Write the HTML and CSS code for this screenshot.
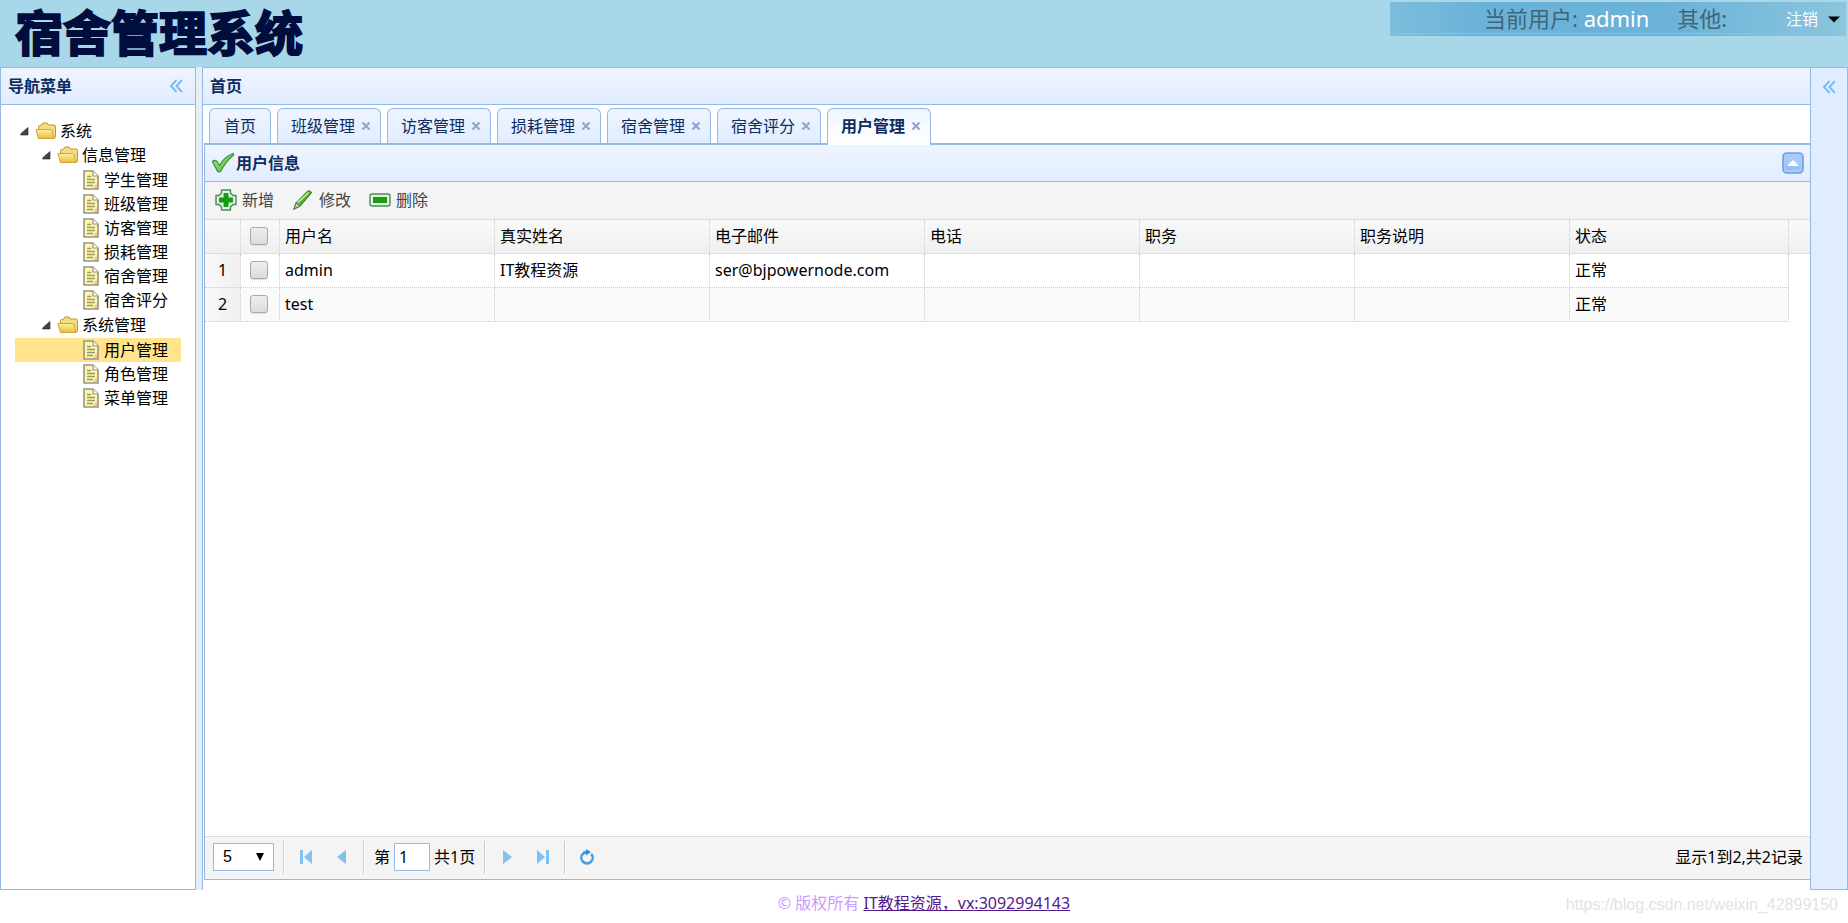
FILE: index.html
```html
<!DOCTYPE html>
<html lang="zh-CN">
<head>
<meta charset="utf-8">
<title>宿舍管理系统</title>
<link rel="stylesheet" href="styles.css">
</head>
<body>
<svg class="defs" aria-hidden="true">
  <defs>
    <linearGradient id="gold" x1="0" y1="0" x2="0" y2="1"><stop offset="0" stop-color="#fff0a0"/><stop offset="1" stop-color="#e9bd3c"/></linearGradient>
    <linearGradient id="leaf" x1="0" y1="0" x2="1" y2="1"><stop offset="0" stop-color="#b6f28a"/><stop offset="1" stop-color="#3fb52e"/></linearGradient>
    <symbol id="arrow" viewBox="0 0 10 10"><path d="M8 1.500V9H.5l1-2z" fill="#444" stroke="#222" stroke-width=".6"/></symbol>
    <symbol id="folder" viewBox="0 0 22 18">
      <path d="M3.500 16.500V4.500q0-1 1-1h1.500l2-2.500h4l1.500 2h5.500q1.500 0 1.500 1.500V14q0 2.500-2 2.500z" fill="#f6dc80" stroke="#c0922a"/>
      <path d="M1 7.500h14.500q1.500 0 1.800 1.500l1.400 7.500H4.500q-1 0-1.400-1.200z" fill="url(#gold)" stroke="#d2a536"/>
    </symbol>
    <symbol id="doc" viewBox="0 0 16 20">
      <path d="M1 1h9l5 5v13H1z" fill="#fdf8a8" stroke="#98948a" stroke-width="1.600"/>
      <path d="M10 1v5h5" fill="#fff" stroke="#98948a" stroke-width="1.200"/>
      <path d="M4 6.500h4M4 9.500h8M4 12.500h8M4 15.500h6" stroke="#9c986c" stroke-width="1.300"/>
      <path d="M14 13v5h-4z" fill="#f6c58b"/>
    </symbol>
    <symbol id="chev" viewBox="0 0 14 14"><path d="M7.500 1 2 7l5.500 6M13 1 7.500 7l5.500 6" fill="none" stroke="#7bbcf0" stroke-width="2"/></symbol>
    <symbol id="cross" viewBox="0 0 10 10"><path d="M1.500 1.500l7 7M8.500 1.500l-7 7" stroke="#8ea6d2" stroke-width="2.200"/></symbol>
  </defs>
</svg>

<header class="banner">
  <h1 class="logo">宿舍管理系统</h1>
  <div class="userbar">
    <span class="label">当前用户: <b class="name">admin</b></span>
    <span class="label other">其他:</span>
    <button class="logout" type="button">注销<svg width="12" height="7" viewBox="0 0 12 7"><path d="M0 .5h12L6 6.500z"/></svg></button>
  </div>
</header>

<div class="layout">
  <aside class="west">
    <div class="panel-head"><h2>导航菜单</h2><button class="plain" type="button" aria-label="收起"><svg width="14" height="14"><use href="#chev"/></svg></button></div>
    <ul class="tree">
      <li><div class="node"><svg width="10" height="10"><use href="#arrow"/></svg><svg class="folder" width="22" height="18"><use href="#folder"/></svg>系统</div>
        <ul>
          <li><div class="node l2"><svg width="10" height="10"><use href="#arrow"/></svg><svg class="folder" width="22" height="18"><use href="#folder"/></svg>信息管理</div>
            <ul>
              <li><a class="node l3" href="#"><svg width="16" height="20"><use href="#doc"/></svg>学生管理</a></li>
              <li><a class="node l3" href="#"><svg width="16" height="20"><use href="#doc"/></svg>班级管理</a></li>
              <li><a class="node l3" href="#"><svg width="16" height="20"><use href="#doc"/></svg>访客管理</a></li>
              <li><a class="node l3" href="#"><svg width="16" height="20"><use href="#doc"/></svg>损耗管理</a></li>
              <li><a class="node l3" href="#"><svg width="16" height="20"><use href="#doc"/></svg>宿舍管理</a></li>
              <li><a class="node l3" href="#"><svg width="16" height="20"><use href="#doc"/></svg>宿舍评分</a></li>
            </ul></li>
          <li><div class="node l2"><svg width="10" height="10"><use href="#arrow"/></svg><svg class="folder" width="22" height="18"><use href="#folder"/></svg>系统管理</div>
            <ul>
              <li><a class="node l3 selected" href="#"><svg width="16" height="20"><use href="#doc"/></svg>用户管理</a></li>
              <li><a class="node l3" href="#"><svg width="16" height="20"><use href="#doc"/></svg>角色管理</a></li>
              <li><a class="node l3" href="#"><svg width="16" height="20"><use href="#doc"/></svg>菜单管理</a></li>
            </ul></li>
        </ul></li>
    </ul>
  </aside>

  <main class="center">
    <div class="panel-head"><h2>首页</h2></div>
    <nav class="tabs">
      <div class="tab"><a href="#">首页</a></div>
      <div class="tab"><a href="#">班级管理</a><button class="plain" type="button" aria-label="关闭"><svg width="10" height="10"><use href="#cross"/></svg></button></div>
      <div class="tab"><a href="#">访客管理</a><button class="plain" type="button" aria-label="关闭"><svg width="10" height="10"><use href="#cross"/></svg></button></div>
      <div class="tab"><a href="#">损耗管理</a><button class="plain" type="button" aria-label="关闭"><svg width="10" height="10"><use href="#cross"/></svg></button></div>
      <div class="tab"><a href="#">宿舍管理</a><button class="plain" type="button" aria-label="关闭"><svg width="10" height="10"><use href="#cross"/></svg></button></div>
      <div class="tab"><a href="#">宿舍评分</a><button class="plain" type="button" aria-label="关闭"><svg width="10" height="10"><use href="#cross"/></svg></button></div>
      <div class="tab active"><a href="#">用户管理</a><button class="plain" type="button" aria-label="关闭"><svg width="10" height="10"><use href="#cross"/></svg></button></div>
    </nav>
    <section class="grid">
      <div class="panel-head">
        <svg width="24" height="22" viewBox="0 0 24 22"><path d="M1.500 9.500q2-2 4.500 0l2.500 4Q13 5 22 1.500q.8 0 .5 1.500Q15 9 9.500 19.500q-1.500 1-3-.5z" fill="url(#leaf)" stroke="#3d9440" stroke-width="1.300"/></svg>
        <h2>用户信息</h2>
        <button class="plain" type="button" aria-label="折叠"><svg width="22" height="22" viewBox="0 0 22 22"><rect x="1" y="1" width="20" height="20" rx="4" fill="#a9cbf8" stroke="#6f9fdc" stroke-width="1.600"/><path d="M3 12h16v6H3z" fill="#97bff4"/><path d="M5 14l6-6 6 6z" fill="#fff"/></svg></button>
      </div>
      <div class="toolbar">
        <button type="button"><svg width="22" height="22" viewBox="0 0 22 22"><path d="M6.500 1h9v3l2.500 2.500h3v9h-3L15.500 18v3h-9v-3L4 15.500H1v-9h3L6.500 4z" fill="#dcf2da" stroke="#4b8a55" stroke-width="1.400" stroke-linejoin="round"/><path d="M9 4.500h4V9h4.500v4H13v4.500H9V13H4.500V9H9z" fill="#189c18" stroke="#189c18"/></svg>新增</button>
        <button type="button"><svg width="22" height="22" viewBox="0 0 22 22"><path d="M2 20l2-6L15.500 2.500q2-1.500 4 1L8 17z" fill="#58c431" stroke="#3c7f35" stroke-width="1.200"/><path d="M5.500 13.500L16.500 3.500" stroke="#c4f29f" stroke-width="1.600"/><path d="M2 20l2-6 4 3z" fill="#c8cfbd" stroke="#557a50"/></svg>修改</button>
        <button type="button"><svg width="22" height="22" viewBox="0 0 22 22"><rect x="1" y="5" width="20" height="12" rx="2" fill="#e2f5e0" stroke="#4b8a55" stroke-width="1.400"/><rect x="4" y="8" width="14" height="6" fill="#189c18"/></svg>删除</button>
      </div>
      <div class="data">
        <table>
          <colgroup><col class="c-num"><col class="c-check"><col class="c"><col class="c"><col class="c"><col class="c"><col class="c"><col class="c"><col><col class="c-rest"></colgroup>
          <thead>
            <tr><th></th><th class="mid"><input type="checkbox" aria-label="全选"></th><th>用户名</th><th>真实姓名</th><th>电子邮件</th><th>电话</th><th>职务</th><th>职务说明</th><th>状态</th><th class="rest"></th></tr>
          </thead>
          <tbody>
            <tr><td class="num">1</td><td class="mid"><input type="checkbox" aria-label="选择第1行"></td><td>admin</td><td>IT教程资源</td><td>ser@bjpowernode.com</td><td></td><td></td><td></td><td>正常</td><td class="rest"></td></tr>
            <tr class="alt"><td class="num">2</td><td class="mid"><input type="checkbox" aria-label="选择第2行"></td><td>test</td><td></td><td></td><td></td><td></td><td></td><td>正常</td><td class="rest"></td></tr>
          </tbody>
        </table>
      </div>
      <div class="pager">
        <span class="size"><select aria-label="每页条数"><option>5</option></select><svg width="8" height="8" viewBox="0 0 8 8"><path d="M0 0h8L4 8z"/></svg></span>
        <i class="sep"></i>
        <button class="plain" type="button" aria-label="第一页"><svg width="12" height="14" viewBox="0 0 12 14"><path d="M0 0h3v14H0zM12 0v14L4 7z"/></svg></button>
        <button class="plain" type="button" aria-label="上一页"><svg width="12" height="14" viewBox="0 0 12 14"><path d="M10 0v14L1 7z"/></svg></button>
        <i class="sep"></i>
        <label class="page">第<input type="text" value="1">共1页</label>
        <i class="sep"></i>
        <button class="plain" type="button" aria-label="下一页"><svg width="12" height="14" viewBox="0 0 12 14"><path d="M2 0v14l9-7z"/></svg></button>
        <button class="plain" type="button" aria-label="最后一页"><svg width="12" height="14" viewBox="0 0 12 14"><path d="M9 0h3v14H9zM0 0v14l8-7z"/></svg></button>
        <i class="sep"></i>
        <button class="plain" type="button" aria-label="刷新"><svg width="16" height="16" viewBox="0 0 16 16"><path d="M3.800 4.800A5.700 5.700 0 1 0 12.200 4.800" fill="none" stroke="#45a0e2" stroke-width="2.600"/><path d="M7 0l5 3-5 3.500V4.500L3 6.500l1-3.700L7 1.800z" fill="#2f93dc"/></svg></button>
        <span class="info">显示1到2,共2记录</span>
      </div>
    </section>
  </main>

  <aside class="east"><button class="plain" type="button" aria-label="展开"><svg width="14" height="14"><use href="#chev"/></svg></button></aside>
</div>

<footer class="copy">© 版权所有 <a href="#">IT教程资源，vx:3092994143</a><span class="mark">https://blog.csdn.net/weixin_42899150</span></footer>
</body>
</html>
```

FILE: styles.css
```css
* { box-sizing: border-box; }

body {
  margin: 0;
  min-height: 100vh;
  display: flex;
  flex-direction: column;
  background: #fff;
  color: #000;
  font: 16px/24px "Noto Sans", "Noto Sans CJK SC", sans-serif;
}

svg { display: block; flex: none; }
.defs { position: absolute; width: 0; height: 0; }
h1, h2, ul { margin: 0; padding: 0; }
ul { list-style: none; }
button, input, select { font: inherit; color: inherit; margin: 0; }
button { border: 0; background: none; padding: 0; }

/* banner */
.banner {
  display: flex;
  justify-content: space-between;
  align-items: flex-start;
  height: 67px;
  padding: 2px 2px 0 15px;
  background: #a8d7e9;
}
.logo {
  color: #010d3c;
  font-family: "Noto Sans CJK SC", sans-serif;
  font-size: 48px;
  line-height: 56px;
  font-weight: 700;
  -webkit-text-stroke: 2px #010d3c;
}
.userbar {
  display: flex;
  align-items: center;
  width: 456px;
  height: 34px;
  padding: 0 6px 0 94px;
  background:
    linear-gradient(transparent 31px, #8ac4e0 31px, #8ac4e0 32px, transparent 32px),
    linear-gradient(90deg, #7dbddb, #6bb2d8 20%, #6bb2d8 60%, #8bc5de);
  line-height: 30px;
}
.label { color: #3f6678; font-size: 22px; line-height: 28px; padding-bottom: 2px; }
.name { color: #fff; font-weight: 400; }
.other { margin-left: 28px; }
.logout { display: flex; align-items: center; gap: 10px; margin-left: auto; color: #fff; }

/* layout */
.layout { flex: 1; display: flex; min-height: 0; background: #e6eef8; }
.west { width: 196px; flex: none; border: 1px solid #95b8e7; background: #fff; }
.center {
  flex: 1;
  min-width: 0;
  display: flex;
  flex-direction: column;
  margin-left: 6px;
  border: solid #95b8e7;
  border-width: 1px 0 0 1px;
  background: #fff;
}
.east {
  display: flex;
  justify-content: center;
  align-items: flex-start;
  flex: none;
  width: 38px;
  padding-top: 12px;
  border: 1px solid #95b8e7;
  background: #e0ecff;
}
.panel-head {
  display: flex;
  align-items: center;
  height: 37px;
  padding: 0 12px 0 7px;
  border-bottom: 1px solid #95b8e7;
  background: linear-gradient(#eff5ff, #e0ecff);
}
.panel-head h2 { flex: 1; color: #0e2d5f; font-size: 16px; line-height: 24px; font-weight: 700; }

/* tree */
.tree { padding: 14px; }
.tree ul ul { padding: 1px 0; }
.node {
  display: flex;
  align-items: center;
  height: 24px;
  padding-left: 5px;
  color: #000;
  text-decoration: none;
}
.folder { margin: 0 3px 0 5px; }
.l2 { padding-left: 27px; }
.l3 { gap: 5px; padding-left: 68px; }
.selected { background: #ffe48d; }

/* tabs */
.tabs {
  display: flex;
  gap: 6px;
  height: 40px;
  margin-left: 1px;
  padding: 3px 5px 0;
  border-bottom: 2px solid #95b8e7;
}
.tab {
  display: flex;
  justify-content: center;
  align-items: center;
  gap: 6px;
  height: 35px;
  padding: 0 9px 0 13px;
  border: 1px solid #95b8e7;
  border-bottom: 0;
  border-radius: 6px 6px 0 0;
  background: linear-gradient(#eff5ff, #e0ecff);
}
.tab:first-child { padding: 0 14px; }
.tab a { color: #0e2d5f; text-decoration: none; }
.tab.active { height: 37px; padding-bottom: 2px; background: linear-gradient(#eff5ff, #fff); font-weight: 700; }

/* data grid */
.grid {
  flex: 1;
  min-height: 0;
  display: flex;
  flex-direction: column;
  margin: 0 0 10px 1px;
  border: solid #95b8e7;
  border-width: 0 0 1px 1px;
}
.grid .panel-head { gap: 1px; padding: 0 6px; }
.toolbar {
  display: flex;
  align-items: center;
  gap: 18px;
  height: 38px;
  padding: 0 10px 2px;
  border-bottom: 1px solid #ddd;
  background: #f4f4f4;
  color: #444;
}
.toolbar button { display: flex; align-items: center; gap: 5px; }
.data { flex: 1; overflow: auto; }
table { width: 100%; table-layout: fixed; border-spacing: 0; }
.c-num { width: 36px; }
.c-check { width: 39px; }
.c { width: 215px; }
.c-rest { width: 21px; }
th, td {
  height: 34px;
  padding: 0 5px 2px;
  border: 0 dotted #ccc;
  border-width: 0 1px 1px 0;
  text-align: left;
  font-weight: 400;
}
thead tr { background: linear-gradient(#f9f9f9, #efefef); }
th { border-bottom: 1px solid #ddd; }
.alt { background: #fafafa; }
.num { background: linear-gradient(90deg, #f9f9f9, #efefef); text-align: center; }
.mid { padding: 0 2px 2px 0; text-align: center; }
.rest { border-right: 0; }
td.rest { border: 0; background: #fff; }
input[type="checkbox"] {
  appearance: none;
  display: block;
  width: 18px;
  height: 18px;
  margin: 0 auto;
  border: 1px solid #a9a9a9;
  border-radius: 3px;
  background: linear-gradient(#eee, #dcdcdc);
  box-shadow: 0 1px 1px #ddd;
}

/* pager */
.pager {
  display: flex;
  align-items: center;
  height: 43px;
  padding: 0 7px 2px 8px;
  border-top: 1px solid #ddd;
  background: #f4f4f4;
}
.pager button svg { fill: #7fc1f0; }
.size { position: relative; }
.size select {
  appearance: none;
  display: block;
  width: 61px;
  height: 28px;
  padding: 0 9px;
  border: 1px solid #95b8e7;
  border-radius: 0;
  background: #fff;
  font-family: "Liberation Sans", Arial, sans-serif;
}
.size svg { position: absolute; right: 10px; top: 10px; pointer-events: none; }
.sep { width: 2px; height: 33px; margin: 0 9px; border-left: 1px solid #ccc; border-right: 1px solid #fff; }
.pager .plain { display: flex; justify-content: center; width: 24px; }
.pager .plain + .plain { margin-left: 12px; }
.page { display: flex; align-items: center; gap: 4px; }
.page input { width: 36px; height: 28px; padding: 0 4px; border: 1px solid #95b8e7; }
.info { margin-left: auto; }

/* footer */
.copy { position: relative; height: 33px; padding-top: 1px; text-align: center; color: #cc99ff; }
.copy a { color: #551a8b; }
.mark {
  position: absolute;
  right: 10px;
  bottom: 6px;
  color: #e3e3e3;
  font-family: "Liberation Sans", Arial, sans-serif;
}
```
